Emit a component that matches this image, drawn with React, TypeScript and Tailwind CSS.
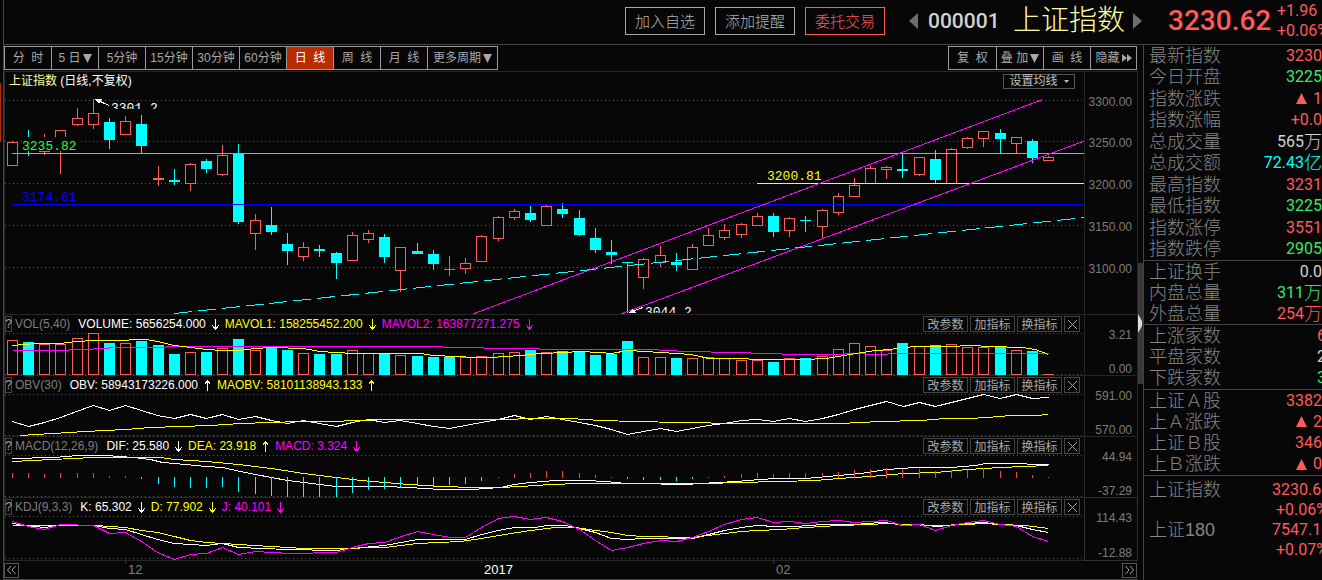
import type { ReactNode } from 'react';

type Candle = [up: 0 | 1, high: number, top: number, bottom: number, low: number];
type Point = [number, number];
type Tone = 'white' | 'yellow' | 'magenta';

const RED = '#ff5a5a';
const CYAN = '#00ffff';
const BG = '#070707';
const COLORS: Record<Tone, string> = { white: '#ffffff', yellow: '#ffff00', magenta: '#ff00ff' };

// plot area origin and bar spacing
const LEFT = 5;
const cx = (i: number) => Math.round(11.75 + i * 16.195);

const candles: Candle[] = [
  [1, 141, 142, 165, 165], [0, 130, 141, 147, 155], [1, 134, 140, 151, 154], [1, 130, 130, 150, 173],
  [1, 108, 118, 124, 125], [1, 99, 113, 124, 128], [0, 118, 122, 139, 148], [1, 116, 121, 134, 134],
  [0, 115, 124, 145, 153], [1, 166, 178, 179, 185], [0, 169, 180, 181, 184], [1, 163, 164, 183, 190],
  [0, 159, 161, 168, 172], [1, 145, 155, 174, 175], [0, 144, 153, 221, 223], [1, 214, 220, 233, 249],
  [0, 207, 225, 231, 234], [0, 233, 244, 250, 264], [1, 242, 247, 256, 260], [0, 245, 249, 250, 256],
  [0, 252, 253, 262, 278], [1, 232, 235, 260, 260], [1, 230, 233, 239, 242], [0, 234, 237, 256, 262],
  [1, 247, 247, 270, 291], [0, 243, 251, 253, 253], [0, 250, 254, 263, 269], [1, 256, 269, 269, 275],
  [1, 258, 263, 268, 273], [1, 235, 236, 261, 261], [1, 216, 217, 238, 240], [1, 209, 211, 217, 219],
  [0, 206, 213, 219, 221], [1, 205, 206, 225, 225], [0, 203, 209, 213, 217], [0, 210, 218, 234, 235],
  [0, 228, 238, 249, 252], [0, 240, 252, 254, 263], [0, 262, 262, 262, 312], [1, 258, 259, 277, 288],
  [1, 246, 255, 262, 266], [0, 253, 262, 264, 270], [1, 244, 247, 269, 269], [1, 228, 235, 245, 245],
  [1, 224, 230, 237, 239], [1, 223, 224, 234, 237], [1, 213, 216, 225, 225], [0, 213, 216, 231, 236],
  [1, 217, 218, 230, 236], [0, 216, 220, 220, 231], [1, 209, 210, 226, 238], [1, 193, 196, 212, 214],
  [1, 178, 185, 196, 196], [1, 166, 168, 183, 183], [1, 166, 167, 169, 178], [0, 152, 169, 170, 177],
  [1, 157, 157, 174, 175], [0, 150, 159, 179, 183], [1, 148, 149, 183, 183], [1, 137, 138, 147, 148],
  [1, 131, 131, 138, 146], [0, 129, 133, 138, 152], [1, 137, 137, 143, 153], [0, 139, 141, 157, 162],
  [1, 156, 157, 160, 160],
];

const volumes = [
  340, 342, 344, 344, 338, 333, 343, 343, 341, 345, 354, 352, 352, 348, 339, 350, 347, 350, 353, 354, 354, 350,
  353, 354, 355, 356, 357, 357, 357, 356, 353, 352, 350, 352, 351, 352, 355, 354, 341, 357, 357, 358, 358, 357,
  358, 360, 360, 362, 358, 358, 356, 349, 343, 346, 350, 343, 346, 345, 344, 347, 347, 346, 350, 351, 374,
];
const volumeDown = new Set([1, 6, 8, 9, 10, 12, 14, 16, 17, 19, 20, 23, 25, 26, 27, 32, 34, 35, 36, 37, 38, 41, 47, 49, 55, 57, 61, 63]);

const macdBars = [
  473, 473, 474, 473, 473, 473, 476, 476, 478, 483, 486, 487, 487, 486, 491, 493, 495, 496, 496, 496, 496, 492,
  489, 488, 487, 485, 485, 484, 483, 480, 477, 474, 473, 471, 471, 473, 475, 477, 478, 479, 479, 480, 478, 477,
  476, 474, 473, 474, 473, 473, 473, 472, 470, 469, 468, 469, 469, 471, 470, 470, 468, 471, 472, 475, 477,
];

const mavol1: Point[] = [[12, 345], [35, 343], [60, 343], [76, 341], [93, 340], [125, 340], [133, 339], [146, 339], [157, 341], [174, 345], [190, 347], [206, 349], [222, 350], [238, 350], [255, 348], [271, 347], [303, 348], [319, 351], [336, 352], [352, 353], [420, 353], [433, 355], [455, 356], [475, 357], [490, 357], [505, 356], [520, 355], [540, 353], [565, 352], [579, 351], [600, 352], [611, 353], [627, 350], [645, 351], [660, 352], [676, 353], [690, 354], [700, 356], [708, 358], [740, 358], [757, 359], [805, 359], [825, 358], [838, 356], [850, 354], [862, 352], [875, 350], [890, 349], [900, 347], [920, 346], [950, 346], [970, 345], [990, 346], [1022, 347], [1035, 349], [1048, 354]];
const mavol2: Point[] = [[12, 350], [52, 350], [85, 349], [117, 347], [150, 347], [182, 346], [442, 346], [443, 347], [523, 348], [555, 349], [650, 349], [685, 351], [735, 352], [765, 353], [798, 354], [840, 354], [850, 353], [880, 354], [895, 353], [1048, 353]];
const obv: Point[] = [[12, 421], [28, 426], [44, 422], [60, 417], [76, 411], [93, 405], [109, 410], [125, 405], [141, 410], [157, 415], [174, 418], [190, 414], [206, 418], [222, 414], [238, 419], [255, 416], [271, 420], [287, 423], [303, 420], [319, 423], [336, 426], [352, 422], [368, 419], [384, 422], [400, 420], [417, 423], [433, 426], [449, 428], [465, 425], [481, 422], [498, 419], [514, 415], [530, 419], [546, 416], [562, 419], [579, 422], [595, 425], [611, 429], [627, 434], [643, 431], [660, 428], [676, 431], [692, 428], [708, 425], [724, 423], [741, 420], [757, 419], [773, 421], [789, 418], [805, 421], [822, 418], [838, 414], [854, 409], [870, 405], [886, 401], [903, 406], [919, 402], [935, 406], [951, 402], [967, 398], [983, 394], [1000, 398], [1016, 394], [1032, 398], [1048, 397]];
const maobv: Point[] = [[20, 435], [52, 433], [85, 431], [125, 429], [150, 427], [210, 425], [240, 423], [300, 421], [330, 421], [384, 419], [505, 419], [530, 418], [570, 418], [600, 420], [635, 421], [680, 422], [740, 423], [840, 423], [880, 421], [920, 420], [945, 418], [970, 418], [1000, 416], [1010, 415], [1035, 415], [1048, 414]];
const dif: Point[] = [[12, 458], [52, 457], [68, 456], [75, 455], [105, 455], [133, 457], [150, 459], [162, 462], [174, 463], [206, 466], [222, 467], [240, 471], [255, 474], [271, 477], [287, 480], [303, 482], [319, 484], [336, 486], [384, 486], [409, 487], [440, 489], [472, 489], [485, 488], [500, 487], [514, 484], [530, 482], [555, 480], [585, 480], [605, 481], [625, 483], [650, 483], [670, 484], [685, 484], [700, 483], [735, 481], [760, 479], [775, 478], [805, 478], [838, 475], [860, 473], [886, 469], [915, 467], [950, 467], [975, 465], [985, 463], [1020, 463], [1032, 464], [1048, 464]];
const dea: Point[] = [[12, 461], [52, 459], [93, 457], [160, 457], [174, 459], [206, 461], [238, 464], [271, 468], [303, 473], [336, 477], [360, 480], [384, 482], [409, 484], [440, 486], [475, 487], [500, 487], [520, 486], [550, 484], [580, 483], [710, 483], [735, 482], [780, 481], [815, 480], [838, 478], [870, 476], [903, 473], [935, 472], [967, 469], [1000, 467], [1024, 466], [1048, 465]];
const kLine: Point[] = [[12, 523], [25, 525], [44, 527], [60, 525], [93, 525], [109, 528], [125, 529], [141, 534], [157, 539], [174, 543], [206, 545], [222, 543], [238, 547], [287, 549], [336, 550], [352, 548], [384, 545], [417, 539], [465, 539], [481, 534], [498, 530], [514, 527], [535, 527], [546, 525], [565, 525], [579, 528], [595, 532], [611, 538], [627, 539], [643, 538], [692, 538], [708, 534], [724, 530], [741, 527], [757, 525], [775, 526], [795, 526], [822, 524], [854, 524], [880, 522], [895, 523], [903, 525], [920, 524], [935, 526], [951, 525], [967, 523], [983, 522], [1000, 524], [1016, 525], [1032, 529], [1048, 532]];
const dLine: Point[] = [[12, 525], [95, 525], [125, 527], [141, 530], [157, 532], [174, 536], [190, 540], [206, 542], [238, 544], [271, 546], [303, 548], [336, 548], [384, 547], [417, 543], [460, 541], [481, 538], [498, 535], [530, 530], [555, 527], [575, 527], [595, 530], [611, 532], [627, 535], [643, 536], [692, 537], [708, 535], [724, 533], [741, 531], [757, 530], [780, 529], [805, 527], [838, 525], [870, 524], [886, 523], [903, 524], [935, 525], [967, 524], [983, 523], [1000, 524], [1025, 525], [1040, 527], [1048, 528]];
const jLine: Point[] = [[12, 521], [28, 526], [44, 529], [60, 524], [93, 525], [109, 533], [125, 532], [141, 541], [157, 552], [174, 559], [190, 554], [206, 553], [222, 547], [238, 554], [255, 551], [290, 553], [336, 552], [352, 547], [368, 543], [384, 542], [401, 536], [417, 531], [433, 534], [450, 537], [465, 537], [481, 527], [498, 518], [514, 516], [530, 519], [546, 517], [562, 521], [579, 529], [595, 540], [611, 550], [627, 547], [643, 543], [660, 540], [676, 541], [692, 537], [708, 531], [724, 524], [741, 519], [757, 517], [773, 522], [789, 521], [805, 523], [822, 521], [838, 520], [854, 522], [870, 521], [886, 520], [903, 525], [919, 524], [935, 530], [951, 525], [967, 522], [983, 520], [1000, 524], [1016, 526], [1032, 536], [1048, 541]];

const periods = ['分  时', '5 日', '5分钟', '15分钟', '30分钟', '60分钟', '日  线', '周  线', '月  线'];

const quoteGroups = [
  {
    height: 'h-[216px]',
    rows: [
      ['最新指数', '3230', 'text-[#ff5a5a]'],
      ['今日开盘', '3225', 'text-[#3ce664]'],
      ['指数涨跌', '▲1', 'text-[#ff5a5a]'],
      ['指数涨幅', '+0.0', 'text-[#ff5a5a]'],
      ['总成交量', '565万', 'text-[#d2d2d2]'],
      ['总成交额', '72.43亿', 'text-[#00ffff]'],
      ['最高指数', '3231', 'text-[#ff5a5a]'],
      ['最低指数', '3225', 'text-[#3ce664]'],
      ['指数涨停', '3551', 'text-[#ff5a5a]'],
      ['指数跌停', '2905', 'text-[#3ce664]'],
    ],
  },
  {
    height: 'h-[64px]',
    rows: [
      ['上证换手', '0.0', 'text-[#d2d2d2]'],
      ['内盘总量', '311万', 'text-[#3ce664]'],
      ['外盘总量', '254万', 'text-[#ff5a5a]'],
    ],
  },
  {
    height: 'h-[65px]',
    rows: [
      ['上涨家数', '6', 'text-[#ff5a5a] -mr-1'],
      ['平盘家数', '2', 'text-[#d2d2d2] -mr-1'],
      ['下跌家数', '3', 'text-[#3ce664] -mr-1'],
    ],
  },
  {
    height: 'h-[86px]',
    rows: [
      ['上证Ａ股', '3382', 'text-[#ff5a5a]'],
      ['上Ａ涨跌', '▲2', 'text-[#ff5a5a]'],
      ['上证Ｂ股', '346', 'text-[#ff5a5a]'],
      ['上Ｂ涨跌', '▲0', 'text-[#ff5a5a]'],
    ],
  },
];

const related = [
  { name: '上证指数', price: '3230.6', change: '+0.06%' },
  { name: '上证180', price: '7547.1', change: '+0.07%' },
];

function Line({ points, color }: { points: Point[]; color: string }) {
  return <polyline points={points.map(([x, y]) => `${x + 0.5},${y + 0.5}`).join(' ')} fill="none" stroke={color} />;
}

function Dots({ y }: { y: number }) {
  return <line x1={LEFT} x2="110%" y1={y + 0.5} y2={y + 0.5} stroke="#5a5a5a" strokeDasharray="1 3" />;
}

// a box is solid when falling or flat, hollow when rising
function Box({ x, top, bottom, color, solid }: { x: number; top: number; bottom: number; color: string; solid: boolean }) {
  if (solid || bottom === top) {
    return <rect x={x - 5} y={top} width="11" height={bottom - top + 1} fill={color} />;
  }
  return <rect x={x - 4.5} y={top + 0.5} width="10" height={bottom - top} fill={BG} stroke={color} />;
}

function Plot({ top, className, children }: { top: number; className: string; children: ReactNode }) {
  return (
    <svg className={`block w-full overflow-hidden ${className}`} shapeRendering="crispEdges" aria-hidden="true">
      <g transform={`translate(${-LEFT} ${-top})`}>{children}</g>
    </svg>
  );
}

function Arrow({ up, color }: { up?: boolean; color: string }) {
  return (
    <svg className="mx-1.5 shrink-0" width="7" height="11" shapeRendering="crispEdges" aria-hidden="true">
      <path d={up ? 'M3.5 11V0M3.5 .5L.5 4.5M3.5 .5L6.5 4.5' : 'M3.5 0V11M3.5 10.5L.5 6.5M3.5 10.5L6.5 6.5'} stroke={color} fill="none" />
    </svg>
  );
}

function Caret() {
  return (
    <svg width="9" height="9" aria-hidden="true">
      <path d="M0 0H9L4.5 9Z" fill="#a8a8a8" />
    </svg>
  );
}

function AxisTexts({ labels, className }: { labels: [string, number][]; className: string }) {
  return (
    <svg className={`block w-full ${className}`} fontSize="12" fill="#7d7d7d">
      {labels.map(([text, y]) => (
        <text key={text} x="47" y={y} textAnchor="end">{text}</text>
      ))}
    </svg>
  );
}

interface IndicatorProps {
  name: string;
  values: { text: string; tone: Tone; up?: boolean }[];
  axis: [string, number][];
  selected?: boolean;
  children: ReactNode;
}

function Indicator({ name, values, axis, selected, children }: IndicatorProps) {
  const btn = 'h-4 w-[45px] border border-[#444] text-center leading-4 text-[#a8a8a8]';
  return (
    <section className="flex border-b border-[#262626]">
      <div className="min-w-0 flex-1 border-r border-[#262626]">
        <div className="flex h-[18px] items-center whitespace-pre">
          <button className="mr-[3px] flex h-4 w-[7px] justify-center border border-[#444] leading-[14px] text-[#a8a8a8]">?</button>
          <span className="mr-2 text-[#7d7d7d]">{name}</span>
          {values.map((v) => (
            <span key={v.text} className="flex items-center" style={{ color: COLORS[v.tone] }}>
              {v.text}
              <Arrow up={v.up} color={COLORS[v.tone]} />
            </span>
          ))}
          <div className="ml-auto mr-1 flex gap-0.5">
            <button className={btn}>改参数</button>
            <button className={btn}>加指标</button>
            <button className={btn}>换指标</button>
            <button className="flex h-4 w-4 items-center justify-center border border-[#444]" aria-label="关闭">
              <svg width="9" height="9" aria-hidden="true"><path d="M0 0L9 9M9 0L0 9" stroke="#a8a8a8" /></svg>
            </button>
          </div>
        </div>
        {children}
      </div>
      <div className={`w-[52px] ${selected ? 'outline outline-[#333]' : ''}`}>
        <AxisTexts labels={axis} className="h-[62px] -mb-0.5" />
      </div>
    </section>
  );
}

function PriceChart() {
  return (
    <Plot top={90} className="h-[224px]">
      {[100, 141, 183, 225, 267].map((y) => <Dots key={y} y={y} />)}
      {candles.map(([up, high, top, bottom, low], i) => {
        const color = up ? RED : CYAN;
        return (
          <g key={i}>
            <rect x={cx(i)} y={high} width="1" height={low - high + 1} fill={color} />
            <Box x={cx(i)} top={top} bottom={bottom} color={color} solid={!up} />
          </g>
        );
      })}
      <rect x="22" y="137" width="56" height="14" fill={BG} />
      <line x1="12" x2="110%" y1="153.5" y2="153.5" stroke="#1eff3c" />
      <line x1="12" x2="110%" y1="204.5" y2="204.5" stroke="#0000ff" />
      <line x1="757" x2="110%" y1="183.5" y2="183.5" stroke="#ffff00" />
      <Line points={[[471, 314], [1042, 99]]} color="#ff00ff" />
      <Line points={[[619, 314], [1085, 140]]} color="#ff00ff" />
      <line x1="174" y1="313.5" x2="1085" y2="217.5" stroke="#00ffff" strokeDasharray="18 6" />
      <path d="M96 99.5L109 105.5M629 312.5L643 307.5" stroke="#fff" />
      <path d="M95 99L102 99L99 104Z M628 313L633 309L636 313Z" fill="#fff" />
      <g className="font-['Liberation_Mono',monospace]" fontSize="13">
        <text x="22" y="150" fill="#1eff3c">3235.82</text>
        <text x="22" y="201" fill="#0000ff">3174.61</text>
        <text x="767" y="180" fill="#ffff00">3200.81</text>
        <svg x="111" y="100" width="60" height="9" overflow="hidden">
          <text x="0" y="12" fill="#fff">3301.2</text>
        </svg>
        <svg x="645" y="304" width="60" height="9" overflow="hidden">
          <text x="0" y="12" fill="#fff">3044.2</text>
        </svg>
      </g>
    </Plot>
  );
}

function Toolbar() {
  const tab = 'flex items-center justify-center gap-0.5 whitespace-pre border-r border-[#9a9a9a]';
  return (
    <div className="flex h-[27px] justify-between border-b border-[#262626] pt-px text-[#a8a8a8]">
      <div className="flex h-6 border-y border-l border-[#9a9a9a]">
        {periods.map((p, i) => (
          <button key={p} className={`w-[47px] ${tab} ${i === 6 ? 'bg-[#b82c00] text-white' : ''}`}>
            {p}
            {i === 1 && <Caret />}
          </button>
        ))}
        <button className={`w-[70px] ${tab}`}>更多周期<Caret /></button>
      </div>
      <div className="mr-px flex h-6 border-y border-l border-[#9a9a9a]">
        <button className={`w-12 ${tab}`}>复  权</button>
        <button className={`w-[47px] ${tab}`}>叠 加<Caret /></button>
        <button className={`w-[47px] ${tab}`}>画  线</button>
        <button className={`w-[46px] ${tab}`}>
          隐藏
          <svg width="10" height="8" aria-hidden="true"><path d="M0 0L5 4L0 8ZM5 0L10 4L5 8Z" fill="#a8a8a8" /></svg>
        </button>
      </div>
    </div>
  );
}

function TopBar() {
  const action = 'h-7 w-20 border text-[15px] leading-none font-light';
  return (
    <header className="flex h-[45px] items-center justify-end overflow-hidden whitespace-nowrap border-b border-[#444] pb-0.5">
      <div className="flex gap-2.5">
        <button className={`${action} border-[#a8a8a8] text-[#b4b4b4]`}>加入自选</button>
        <button className={`${action} border-[#a8a8a8] text-[#b4b4b4]`}>添加提醒</button>
        <button className={`${action} border-[#ff5a5a] text-[#ff5a5a]`}>委托交易</button>
      </div>
      <button className="ml-6" aria-label="上一个">
        <svg width="9" height="16" aria-hidden="true"><path d="M9 0V16L0 8Z" fill="#6e6e6e" /></svg>
      </button>
      <span className="ml-2.5 w-[71px] font-['Roboto',sans-serif] text-[21px] font-medium text-[#d2d2d2]">000001</span>
      <h1 className="ml-3.5 w-28 text-[28px] font-light leading-10 text-[#ffffa0]">上证指数</h1>
      <button className="ml-2" aria-label="下一个">
        <svg width="9" height="16" aria-hidden="true"><path d="M0 0V16L9 8Z" fill="#6e6e6e" /></svg>
      </button>
      <strong className="ml-[26px] w-[103px] font-['Roboto',sans-serif] text-[28px] font-medium text-[#ff5a5a]">3230.62</strong>
      <div className="ml-1.5 w-[45px] font-['Roboto',sans-serif] text-base leading-5 text-[#ff5a5a]">
        <p>+1.96</p>
        <p>+0.06%</p>
      </div>
    </header>
  );
}

function Value({ text }: { text: string }) {
  const rising = text.startsWith('▲');
  const unit = text.match(/[万亿]$/)?.[0];
  return (
    <>
      {rising && (
        <svg className="mr-1.5" width="11" height="11" role="img" aria-label="涨"><path d="M0 11H11L5.500 0Z" fill="currentColor" /></svg>
      )}
      {text.replace(/[▲万亿]/g, '')}
      {unit && <span className="text-lg leading-none font-light">{unit}</span>}
    </>
  );
}

function QuotePanel() {
  return (
    <aside className="w-[179px] shrink-0 overflow-hidden border-l border-[#444] text-lg leading-none text-[#858585]">
      {quoteGroups.map((g, i) => (
        <dl key={i} className={`flex flex-col border-b border-[#444] ${g.height}`}>
          {g.rows.map(([label, value, tone]) => (
            <div key={label} className="flex min-h-0 flex-1 items-center justify-between pl-[5px]">
              <dt className="font-light">{label}</dt>
              <dd className={`flex items-center font-['Roboto','Noto_Sans_CJK_SC',sans-serif] text-base leading-none ${tone}`}>
                <Value text={value} />
              </dd>
            </div>
          ))}
        </dl>
      ))}
      <dl className="pt-1">
        {related.map((r) => (
          <div key={r.name} className="flex justify-between pl-[5px]">
            <dt className="font-light leading-5">{r.name}</dt>
            <dd className="w-[50px] whitespace-nowrap font-['Roboto',sans-serif] text-base leading-5 text-[#ff5a5a]">
              <p>{r.price}</p>
              <p className="ml-1">{r.change}</p>
            </dd>
          </div>
        ))}
      </dl>
    </aside>
  );
}

export default function App() {
  return (
    <div className="flex min-h-screen overflow-hidden bg-[#070707] font-['Liberation_Sans','Noto_Sans_CJK_SC',sans-serif] text-xs">
      <div className="w-1 shrink-0 border-r border-[#444] pt-[83px]">
        <div className="h-[59px] w-px bg-[#b82c00]" />
      </div>
      <div className="flex min-w-0 flex-1 flex-col">
        <TopBar />
        <div className="flex flex-1">
          <main className="min-w-0 flex-1 border-b border-[#444]">
            <Toolbar />
            <div className="border-x border-[#262626]">
              <section className="flex border-b border-[#262626]">
                <div className="min-w-0 flex-1 border-r border-[#262626]">
                  <div className="flex h-[18px] items-center justify-between pl-1 pr-[9px]">
                    <h2 className="text-white"><span className="text-[#ffffa0]">上证指数</span> (日线,不复权)</h2>
                    <button className="flex h-[15px] w-[72px] items-center justify-center gap-1.5 border border-[#555] leading-none text-[#c0c0c0]">
                      设置均线
                      <svg width="5" height="3" aria-hidden="true"><path d="M0 0H5L2.500 3Z" fill="#c0c0c0" /></svg>
                    </button>
                  </div>
                  <PriceChart />
                </div>
                <div className="w-[52px]">
                  <AxisTexts
                    labels={[['3300.00', 34], ['3250.00', 75], ['3200.00', 117], ['3150.00', 159], ['3100.00', 201]]}
                    className="h-[242px]"
                  />
                </div>
              </section>

              <Indicator
                name="VOL(5,40)"
                values={[
                  { text: 'VOLUME: 5656254.000', tone: 'white' },
                  { text: 'MAVOL1: 158255452.200', tone: 'yellow' },
                  { text: 'MAVOL2: 163877271.275', tone: 'magenta' },
                ]}
                axis={[['3.21', 24], ['0.00', 58]]}
              >
                <Plot top={333} className="h-[42px]">
                  <Dots y={333} />
                  <Dots y={374} />
                  {volumes.map((y, i) => (
                    <Box key={i} x={cx(i)} top={y} bottom={374} color={volumeDown.has(i) ? CYAN : RED} solid={volumeDown.has(i)} />
                  ))}
                  <Line points={mavol2} color={COLORS.magenta} />
                  <Line points={mavol1} color={COLORS.yellow} />
                </Plot>
              </Indicator>

              <Indicator
                name="OBV(30)"
                values={[
                  { text: 'OBV: 58943173226.000', tone: 'white', up: true },
                  { text: 'MAOBV: 58101138943.133', tone: 'yellow', up: true },
                ]}
                axis={[['591.00', 24], ['570.00', 58]]}
              >
                <Plot top={394} className="h-[42px]">
                  <Dots y={394} />
                  <Dots y={435} />
                  <Line points={obv} color={COLORS.white} />
                  <Line points={maobv} color={COLORS.yellow} />
                </Plot>
              </Indicator>

              <Indicator
                name="MACD(12,26,9)"
                values={[
                  { text: 'DIF: 25.580', tone: 'white' },
                  { text: 'DEA: 23.918', tone: 'yellow', up: true },
                  { text: 'MACD: 3.324', tone: 'magenta' },
                ]}
                axis={[['44.94', 24], ['-37.29', 58]]}
              >
                <Plot top={455} className="h-[42px]">
                  <Dots y={455} />
                  <Dots y={496} />
                  <Line points={dif} color={COLORS.white} />
                  <Line points={dea} color={COLORS.yellow} />
                  {macdBars.map((y, i) => (
                    <rect key={i} x={cx(i)} y={Math.min(y, 477)} width="1" height={Math.abs(y - 477) + 1} fill={y > 477 ? CYAN : '#ff3c3c'} />
                  ))}
                </Plot>
              </Indicator>

              <Indicator
                name="KDJ(9,3,3)"
                values={[
                  { text: 'K: 65.302', tone: 'white' },
                  { text: 'D: 77.902', tone: 'yellow' },
                  { text: 'J: 40.101', tone: 'magenta' },
                ]}
                axis={[['114.43', 24], ['-12.88', 59]]}
                selected
              >
                <Plot top={516} className="h-[44px]">
                  <Dots y={516} />
                  <Dots y={558} />
                  <Line points={kLine} color={COLORS.white} />
                  <Line points={dLine} color={COLORS.yellow} />
                  <Line points={jLine} color={COLORS.magenta} />
                </Plot>
              </Indicator>
            </div>

            <div className="flex h-[18px] items-center pr-px">
              <button className="flex h-[15px] w-[15px] items-center justify-center border border-[#555]" aria-label="向前">
                <svg width="9" height="8" aria-hidden="true"><path d="M4 0L.5 4L4 8M8.500 0L5 4L8.500 8" stroke="#a8a8a8" fill="none" /></svg>
              </button>
              <svg className="h-[18px] flex-1" fontSize="13">
                <g transform="translate(-19 0)">
                  <path d="M125.500 0V2M481.500 0V2M773.500 0V2" stroke="#444" />
                  <text x="128" y="13" fill="#7d7d7d">12</text>
                  <text x="484" y="13" fill="#fff">2017</text>
                  <text x="776" y="13" fill="#7d7d7d">02</text>
                </g>
              </svg>
              <button className="flex h-[15px] w-[15px] items-center justify-center border border-[#555]" aria-label="向后">
                <svg width="9" height="8" aria-hidden="true"><path d="M.5 0L4 4L.5 8M5 0L8.500 4L5 8" stroke="#a8a8a8" fill="none" /></svg>
              </button>
            </div>
          </main>
          <div className="w-[5px] shrink-0 pt-[218px]">
            <button className="flex h-[121px] w-[5px] items-center bg-[#3a3a3a]" aria-label="收起侧栏">
              <svg width="4" height="19" aria-hidden="true"><path d="M0 0L4 7V12L0 19Z" fill="#dcdcdc" /></svg>
            </button>
          </div>
          <QuotePanel />
        </div>
      </div>
    </div>
  );
}
